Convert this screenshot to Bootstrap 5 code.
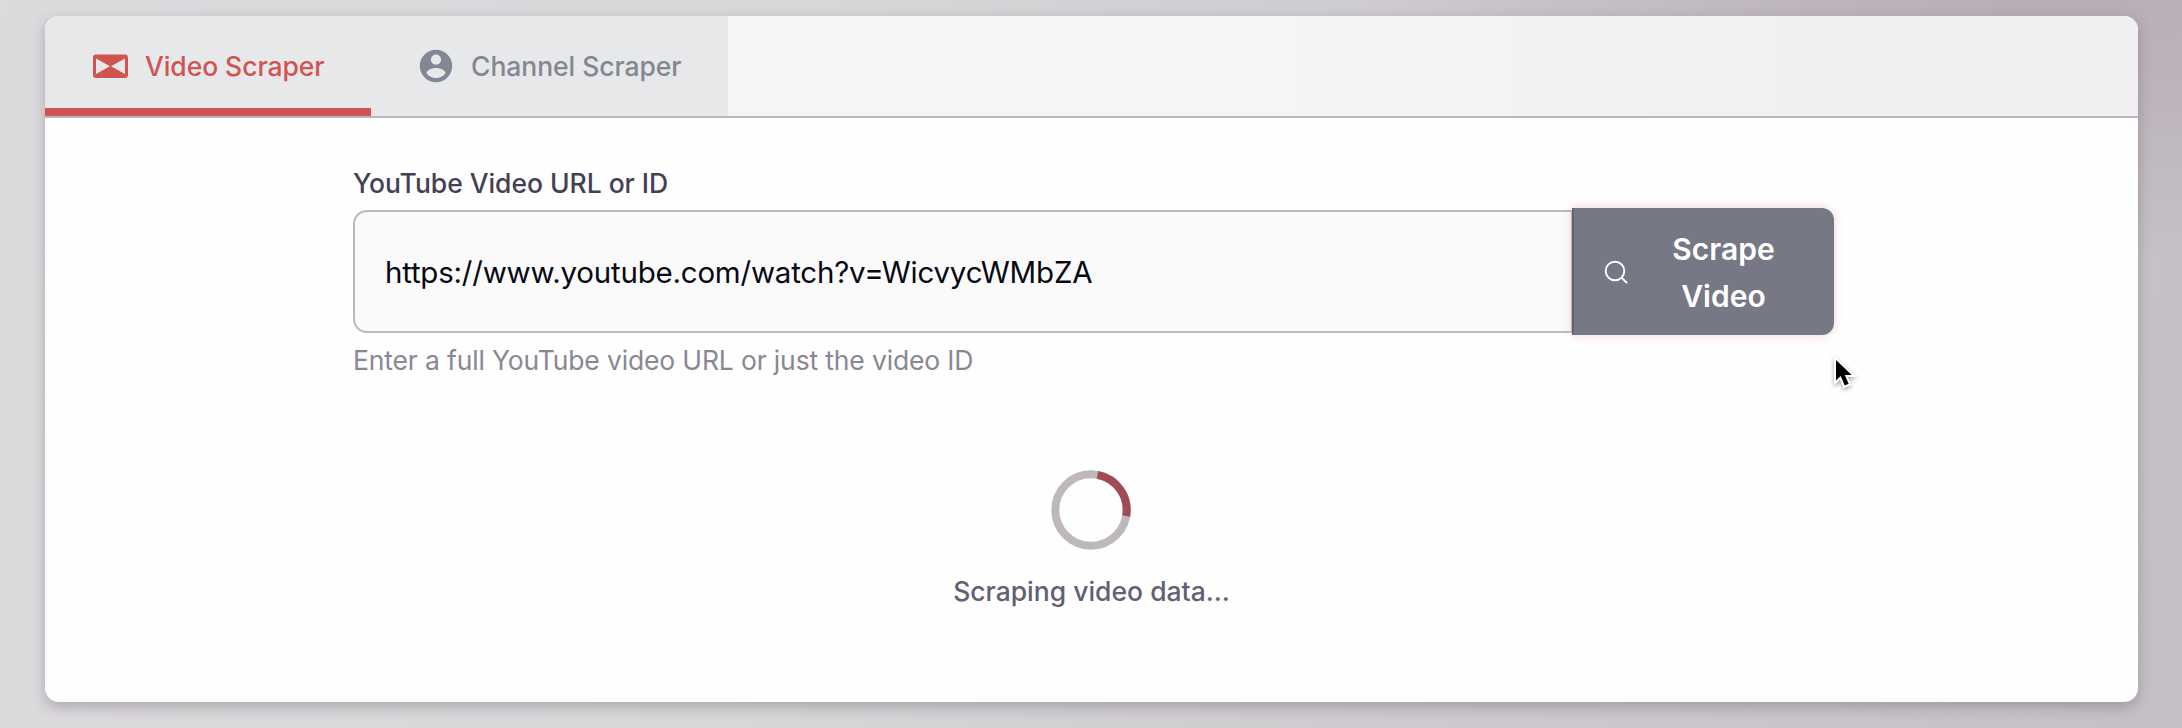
<!DOCTYPE html>
<html lang="en">
<head>
<meta charset="utf-8">
<meta name="viewport" content="width=device-width, initial-scale=1">
<title>Video Scraper</title>
<link href="https://cdn.jsdelivr.net/npm/bootstrap@5.3.0/dist/css/bootstrap.min.css" rel="stylesheet">
<style>
  body {
    height: 728px; overflow: hidden; padding: 16px 44px 26px 45px;
    font-family: Inter, "Liberation Sans", sans-serif; font-size: 26.5px; line-height: 42px;
    background: radial-gradient(ellipse 700px 260px at 2060px 0, #b8adb5 0, rgba(184,173,181,0) 100%),
      linear-gradient(97deg, #dddade 0%, #d8d7d9 35%, #cdc9ce 68%, #c5c0c5 100%);
  }
  .scraper-card { border: 0; border-radius: 14px; overflow: hidden; background: #fefefe; box-shadow: 0 5px 14px rgba(50,45,55,.28); }
  .tab-strip { height: 102px; border-bottom: 2px solid #bbb6bb; background: linear-gradient(90deg, #f5f5f5 60%, #f0eff1 90%, #f1eff1); }
  .scraper-tab { height: 100px; background: #e6e8e9; color: #858694; font-weight: 500; border-radius: 0; }
  .scraper-tab.active { width: 326px; color: #d05552; border-bottom: 8px solid #d05552; padding: 8px 0 0 46px; letter-spacing: -.06px; }
  .channel-tab { width: 357px; padding-left: 47px; letter-spacing: -.06px; }
  .channel-tab svg { margin-right: 17px; }
  .form-area { width: 1481px; margin: 41px auto 0 308px; }
  .url-label { color: #424154; font-weight: 500; line-height: 48px; height: 51px; margin: 0; letter-spacing: -.04px; }
  .url-input { height: 123px; border: 2px solid #bdb8bc; border-radius: 14px; background: #fafafa; color: #070914; padding: 0 31px 0 30px; font-size: 29.5px; letter-spacing: -.22px; }
  .scrape-btn { width: 262px; height: 127px; margin: -2px 0; border: 0; border-left: 2px solid #656275; border-radius: 0 12px 12px 0 !important; background: #777886; color: #fff; font-size: 30px; font-weight: 600; line-height: 47px; box-shadow: 0 0 10px rgba(220,90,100,.27); padding: 2px 15px 0 30px; }
  .scrape-btn:hover { background: #777886; color: #fff; }
  .scrape-btn svg { margin-top: -2px; }
  .help-line { color: #888894; margin-top: 6px; letter-spacing: -.15px; }
  .loading-area { margin-top: 89px; gap: 20px; }
  .loader { width: 80px; height: 80px; margin-right: 1px; }
  .status-line { color: #626073; font-weight: 500; }
  .pointer { position: absolute; left: 1829px; top: 354px; width: 36px; height: 42px; filter: drop-shadow(0 2px 2px rgba(0,0,0,.35)); }
</style>
</head>
<body>
<main class="card scraper-card h-100">
  <nav class="tab-strip d-flex flex-shrink-0">
    <a class="scraper-tab active d-flex align-items-center text-decoration-none">
      <svg width="38" height="28" viewBox="0 0 38 28" class="me-3"><rect x="2" y="2.500" width="35" height="23.500" rx="3" fill="currentColor"/><path d="M5 6.500v15.500l14-7.750zM34 6.500v15.500l-14-7.750z" fill="#ebe7e9"/></svg>
      <span>Video Scraper</span>
    </a>
    <a class="scraper-tab channel-tab d-flex align-items-center text-decoration-none">
      <svg width="36" height="36" viewBox="0 0 24 24"><path fill="currentColor" fill-rule="evenodd" d="M12 1.200a10.800 10.800 0 1 0 0 21.600 10.800 10.800 0 0 0 0-21.600Zm0 3.100a3.400 3.400 0 1 1 0 6.800 3.400 3.400 0 0 1 0-6.800Zm0 15.700c-2.700 0-5-1.300-6.400-3.400.2-2.200 4.300-3.300 6.400-3.300s6.200 1.100 6.400 3.300C17 18.700 14.700 20 12 20Z"/></svg>
      <span>Channel Scraper</span>
    </a>
  </nav>
  <div class="form-area">
    <label class="url-label d-block" for="video-url">YouTube Video URL or ID</label>
    <div class="input-group flex-nowrap">
      <input id="video-url" class="form-control url-input" value="https://www.youtube.com/watch?v=WicvycWMbZA">
      <button class="btn scrape-btn d-flex align-items-center flex-shrink-0">
        <svg width="24" height="24" viewBox="0 0 24 24" fill="none" stroke="currentColor" stroke-width="1.900" stroke-linecap="round"><circle cx="11" cy="11" r="9.300"/><path d="m18 18 4.500 4.500"/></svg>
        <span class="flex-grow-1 text-center">Scrape<br>Video</span>
      </button>
    </div>
    <div class="help-line">Enter a full YouTube video URL or just the video ID</div>
  </div>
  <div class="loading-area d-flex flex-column align-items-center">
    <svg class="loader" viewBox="0 0 80 80" fill="none" stroke-width="8"><circle cx="40" cy="40" r="35.700" stroke="#beb7bc"/><path d="M46.500 4.900A35.700 35.700 0 0 1 75.200 46" stroke="#a14c55"/></svg>
    <div class="status-line">Scraping video data...</div>
  </div>
</main>
<svg class="pointer" viewBox="0 0 36 42"><path d="M7 6v20.500l4.700-4.500 4 9.500 4-1.700-4-8.800h7z" fill="#000" stroke="#fff" stroke-width="4" paint-order="stroke"/></svg>
<script src="https://cdn.jsdelivr.net/npm/bootstrap@5.3.0/dist/js/bootstrap.bundle.min.js"></script>
</body>
</html>
